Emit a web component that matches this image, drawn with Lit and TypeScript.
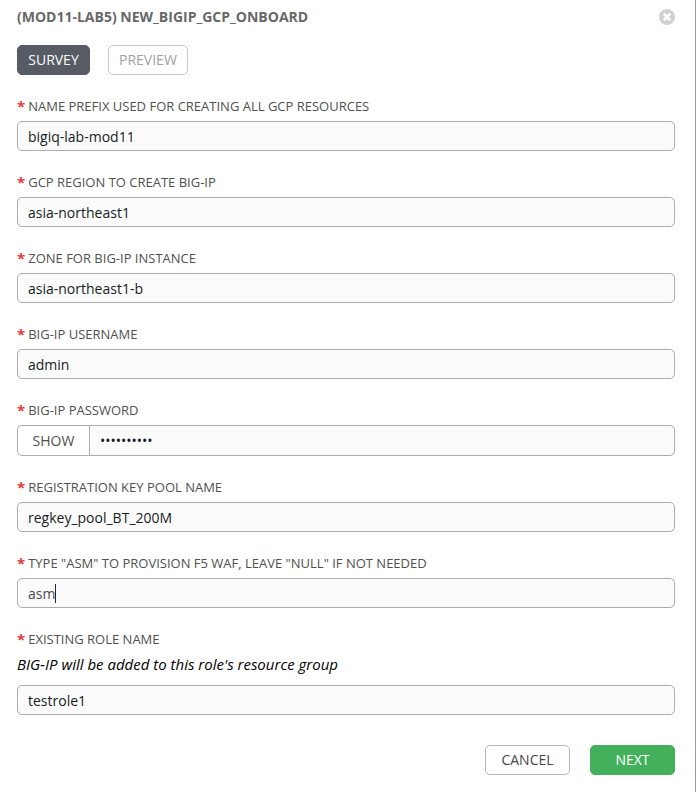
import { LitElement, html, css, nothing } from "lit";
import { customElement } from "lit/decorators.js";

interface Field {
  id: string;
  label: string;
  value: string;
  hint?: string;
  secret?: boolean;
  active?: boolean;
}

const FIELDS: Field[] = [
  { id: "prefix", label: "NAME PREFIX USED FOR CREATING ALL GCP RESOURCES", value: "bigiq-lab-mod11" },
  { id: "region", label: "GCP REGION TO CREATE BIG-IP", value: "asia-northeast1" },
  { id: "zone", label: "ZONE FOR BIG-IP INSTANCE", value: "asia-northeast1-b" },
  { id: "username", label: "BIG-IP USERNAME", value: "admin" },
  { id: "password", label: "BIG-IP PASSWORD", value: "0123456789", secret: true },
  { id: "pool", label: "REGISTRATION KEY POOL NAME", value: "regkey_pool_BT_200M" },
  { id: "waf", label: 'TYPE "ASM" TO PROVISION F5 WAF, LEAVE "NULL" IF NOT NEEDED', value: "asm", active: true },
  { id: "role", label: "EXISTING ROLE NAME", value: "testrole1", hint: "BIG-IP will be added to this role's resource group" },
];

@customElement("app-root")
export class AppRoot extends LitElement {
  static styles = css`
    :host {
      display: block;
      box-sizing: border-box;
      min-height: 100vh;
      padding: 7px 20px 17px 17px;
      border-right: 1px solid #999;
      background: #fff;
      color: #161b1f;
      font: 14px/20px "Open Sans", "Noto Sans", sans-serif;
    }
    * {
      box-sizing: border-box;
    }
    header {
      display: flex;
      justify-content: space-between;
      align-items: center;
    }
    h1 {
      margin: 0;
      font-size: 14px;
      line-height: 20px;
      font-weight: 700;
      color: #686868;
    }
    button {
      height: 30px;
      padding: 0 10px;
      border: 1px solid #b7b7b7;
      border-radius: 5px;
      background: #fff;
      color: #484848;
      font: inherit;
    }
    .close {
      display: flex;
      width: 16px;
      height: 16px;
      padding: 0;
      border: 0;
      background: none;
    }
    .tabs {
      display: flex;
      gap: 18px;
      margin: 18px 0 21px;
    }
    .tab {
      color: #a1a1a1;
      border-color: #c8c8c8;
    }
    .tab.current {
      min-width: 73px;
      background: #575b64;
      border-color: #575b64;
      color: #fff;
    }
    form {
      display: flex;
      flex-direction: column;
      gap: 21px;
    }
    .label {
      display: flex;
      gap: 3px;
      margin-bottom: 5px;
      font-size: 13px;
      color: #505050;
    }
    .star {
      font-size: 15px;
      font-weight: 700;
      color: #e23c3c;
    }
    .hint {
      margin: 5px 0 11px;
      font-size: 15px;
      font-style: italic;
      color: #000;
    }
    .control {
      position: relative;
      display: flex;
    }
    input {
      flex: 1;
      min-width: 0;
      height: 30px;
      padding: 0 10px;
      border: 1px solid #adadad;
      border-radius: 5px;
      outline: none;
      background: #fbfbfb;
      color: #161b1f;
      font: inherit;
    }
    .active input {
      color: #464c55;
    }
    .caret {
      position: absolute;
      left: 38px;
      top: 6px;
      width: 1px;
      height: 19px;
      background: #22272e;
    }
    .secret button,
    .secret input {
      height: 31px;
    }
    .secret button {
      width: 72px;
      border-color: #adadad;
      border-right: 0;
      border-radius: 5px 0 0 5px;
      color: #505050;
    }
    .secret input {
      border-radius: 0 5px 5px 0;
    }
    footer {
      display: flex;
      justify-content: flex-end;
      gap: 20px;
      margin-top: 9px;
    }
    footer button {
      width: 85px;
    }
    .next {
      background: #43b05c;
      border-color: #43b05c;
      color: #fff;
    }
  `;

  private renderField(f: Field) {
    const kind = f.secret ? "secret" : f.active ? "active" : "";
    return html`<div>
      <label class="label" for=${f.id}><span class="star">*</span><span>${f.label}</span></label>
      ${f.hint ? html`<p class="hint" id="${f.id}-hint">${f.hint}</p>` : nothing}
      <div class="control ${kind}">
        ${f.secret ? html`<button type="button">SHOW</button>` : nothing}
        <input
          id=${f.id}
          type=${f.secret ? "password" : "text"}
          .value=${f.value}
          required
          autocomplete="off"
          spellcheck="false"
          aria-describedby=${f.hint ? `${f.id}-hint` : nothing}
        />
        ${f.active ? html`<span class="caret"></span>` : nothing}
      </div>
    </div>`;
  }

  render() {
    return html`
      <header>
        <h1>(MOD11-LAB5) NEW_BIGIP_GCP_ONBOARD</h1>
        <button class="close" type="button" aria-label="Close">
          <svg width="16" height="16" viewBox="0 0 16 16">
            <circle cx="8" cy="8" r="8" fill="#d0d0d0" />
            <path d="M4.7 4.7l6.6 6.6M11.3 4.7l-6.6 6.6" stroke="#fff" stroke-width="2.8" />
          </svg>
        </button>
      </header>
      <nav class="tabs">
        <button class="tab current" type="button">SURVEY</button>
        <button class="tab" type="button">PREVIEW</button>
      </nav>
      <form>
        ${FIELDS.map((f) => this.renderField(f))}
        <footer>
          <button type="button">CANCEL</button>
          <button class="next" type="button">NEXT</button>
        </footer>
      </form>
    `;
  }
}
